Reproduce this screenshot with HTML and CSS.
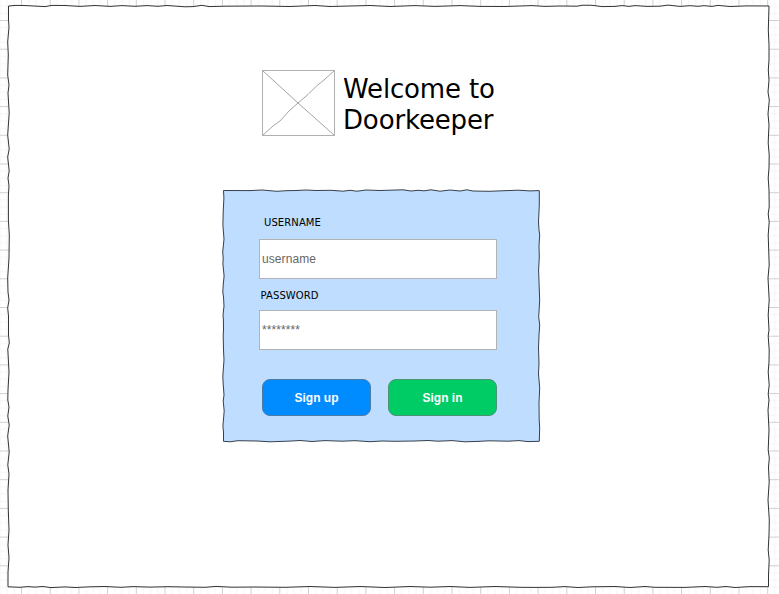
FILE: index.html
```
<!DOCTYPE html>
<html lang="en">
<head>
<meta charset="utf-8">
<title>Doorkeeper</title>
<link rel="stylesheet" href="styles.css">
</head>
<body>
<svg class="sheet" width="779" height="594" aria-hidden="true">
  <defs>
    <pattern id="grid" x="21" y="20" width="28.7" height="28.7" patternUnits="userSpaceOnUse">
      <path class="minor" d="M7.7 0V28.7M14.8 0V28.7M22 0V28.7M0 7.7H28.7M0 14.8H28.7M0 22H28.7"/>
      <path class="major" d="M.5 0V28.7M0 .5H28.7"/>
    </pattern>
  </defs>
  <rect width="779" height="594" fill="url(#grid)"/>
  <path class="frame" d="M8.5 6L16 5.4 24 5.5 45 6.6 52 5.4 65 5.5 80 6.4 95 5.5 110 6.4 122 5.6 135 6.3 147 5.6 158 6.3 167 5.5 185 6.8 193 6.6 202 5.3 209 6.6 225 6.2 260 6 290 6.5 315 5.5 330 6.5 350 6 370 5.5 390 6.5 415 5.6 435 6.4 460 5.6 480 6.4 505 6.5 532 5.6 545 6.4 560 6 577 6.2 583 5.2 592 5.3 602 6.6 615 6.4 622 5.6 629 6.4 635 5.6 647 6.4 660 6.2 668 5.1 680 6.4 690 5.7 698 6.3 704 5.7 712 6.4 718 5.4 730 6.5 747 5.9 769 6
  768.3 30 769 45 769 60 768.3 70 769 80 768 92 769.3 100 768 114 769 125 768.5 135 768.2 143 769.2 155 769 168 768.2 178 769 190 769.2 207 768.2 214 769.2 222 768.2 235 769.2 265 768 278 769.2 300 768.2 315 769 330 768.2 336 769.2 350 769 362 768.2 372 769.2 385 768.2 394 769 400 768 410 769 430 768.2 450 769.3 458 768.5 467 769.2 482 768 500 769.3 520 769 535 768.2 550 769.2 560 768.5 575 768.5 586.7
  750 586.6 735 587.5 726 586.5 717 587.3 705 586.5 685 587.4 655 587.3 645 586.5 630 587.5 615 586.5 592 586.8 578 587.5 565 586.6 552 587.3 535 587.4 520 587.3 495 586.5 470 587.4 450 586.5 430 587.2 410 586.5 385 587.5 360 586.5 335 587.4 310 586.5 285 587.3 255 587 232 587.2 216 586.4 205 587.3 185 587 168 586.7 150 587.1 133 586.6 121 587.3 105 586.5 90 586.8 75 587.5 65 586.9 51 587.6 43 586.5 35 587.1 28 586.6 20 587.3 8 586.8
  8 572 9 558 8 545 9 530 8.3 510 8 490 9 474 7.8 465 9.2 452 7.7 436 9.2 425 7.8 416 9 407 7.8 400 8 390 9 372 7.8 349 9.3 343 8.5 335 8.5 316 7.7 308 9 300 8 292 7.7 278 9 258 9.3 235 8.4 220 8.4 195 9 186 8 178 9.2 171 7.7 157 9.2 149 7.7 135 9.2 113 8 93 9 85 7.7 75 8.3 55 7.7 42 9 27 8.5 20Z"/>
</svg>
<main class="page">
  <header class="brand">
    <svg class="logo" width="73" height="66" viewBox="0 0 73 66" aria-hidden="true">
      <path class="logo-box" d="M.5 .5H72.5V65.5H.5Z"/>
      <path class="logo-cross" d="M.5 .5L36 33 72.5 65.5M72.5 .5L62 10 54.5 16 46 24.5 36 33 27 41 18 51 11 56 .5 65.5"/>
    </svg>
    <h1 class="title">Welcome to<br>Doorkeeper</h1>
  </header>
  <form class="card">
    <svg class="card-shape" width="320" height="256" viewBox="221 188 320 256" aria-hidden="true">
      <path d="M223.5 190.5L250 190.6 262 190 277 191.3 286 190.7 296 190.5 306 190 316 190.5 331 190.3 343 191.2 350 190.3 357 191.2 366 190 380 190.5 403 189.8 411 191 418 190.3 424 190.8 431 189.8 440 191.2 450 190 460 191 467 189.8 473 191 489 191.3 518 190.2 530 190.9 539.3 190.6
      539.3 205 538.5 222 539 230 539.7 235 539 246 539.3 257 538.6 270 539.2 287 539.7 300 539 312 538.7 317 539.7 325 539 335 538.5 348 539 363 538.5 374 539.7 388 539 403 539.2 420 539.7 428 539.3 441.3
      528 441.6 519 440.6 508 441.2 489 440.8 478 441.4 465 441.8 452 440.6 438 441.2 428 440.5 415 441 395 441.3 382 441 370 441.7 355 440.7 342 441.2 325 440.6 312 441.5 300 440.5 290 441.1 270 441.8 257 441 238 440.7 230 441.8 223.5 441.3
      223.5 432 222.9 426 224.2 411 223.2 401 224 395 223.2 384 222.8 376 224 360 223.5 350 223.2 335 223.5 330 223.4 320 223 315 224 306 223.5 297 222.8 292 223.2 285 224.1 276 222.9 264 223.2 258 222.7 252 224 239 222.9 225 223.2 212 223.9 198Z"/>
    </svg>
    <label class="label label-user" for="user">USERNAME</label>
    <input class="field" id="user" type="text" value="username">
    <label class="label label-pass" for="pass">PASSWORD</label>
    <input class="field field-pass" id="pass" type="text" value="********">
    <div class="actions">
      <button class="button signup" type="button">Sign up</button>
      <button class="button signin" type="button">Sign in</button>
    </div>
  </form>
</main>
</body>
</html>
```
FILE: styles.css
```
* { box-sizing: border-box; }

body {
  margin: 0;
  height: 594px;
  overflow: hidden;
  background: #fff;
  color: #000;
  font-family: "Liberation Sans", Arial, sans-serif;
}

.sheet { position: absolute; top: 0; left: 0; }
.minor { stroke: #f5f5f5; fill: none; }
.major { stroke: #d0d0d0; fill: none; }
.frame { fill: #fff; stroke: #333; stroke-width: 1; }

.page {
  position: relative;
  padding: 70px 0 0 223px;
}

.brand {
  display: flex;
  gap: 8px;
  height: 120px;
  padding-left: 39px;
}

.logo { flex: none; }
.logo path { fill: none; }
.logo-box { stroke: #b0b0b0; }
.logo-cross { stroke: #a4a4a4; }

.title {
  margin: 4px 0 0;
  font: 400 26px/31px "DejaVu Sans", Verdana, sans-serif;
  letter-spacing: -.15px;
  white-space: nowrap;
}

.card {
  position: relative;
  width: 317px;
  height: 252px;
  padding: 26px 43px 0 36px;
}

.card-shape { position: absolute; top: -2px; left: -2px; }
.card-shape path { fill: #bfddff; stroke: #36404c; stroke-width: 1; }

.label {
  position: relative;
  display: block;
  height: 14px;
  font: 10px/14px "DejaVu Sans", Verdana, sans-serif;
  letter-spacing: .1px;
}
.label-user { margin: 0 0 9px 5px; }
.label-pass { margin: 10px 0 7px 1.5px; }

.field {
  position: relative;
  display: block;
  width: 238px;
  height: 40px;
  padding: 0 2px;
  border: 1px solid #b3b3b3;
  border-radius: 0;
  background: #fff;
  color: #666;
  font: 12px "Liberation Sans", Arial, sans-serif;
  letter-spacing: .08px;
}
.field-pass { padding-bottom: 1px; }

.actions {
  position: relative;
  display: flex;
  gap: 17px;
  margin: 29px 0 0 3px;
}

.button {
  flex: none;
  width: 109px;
  height: 37px;
  padding: 0;
  border: 1px solid;
  border-radius: 8px;
  color: #fff;
  font: bold 12px "Liberation Sans", Arial, sans-serif;
}
.signup { background: #008cff; border-color: #4c7ba8; }
.signin { background: #00cc66; border-color: #4c9475; }
```
